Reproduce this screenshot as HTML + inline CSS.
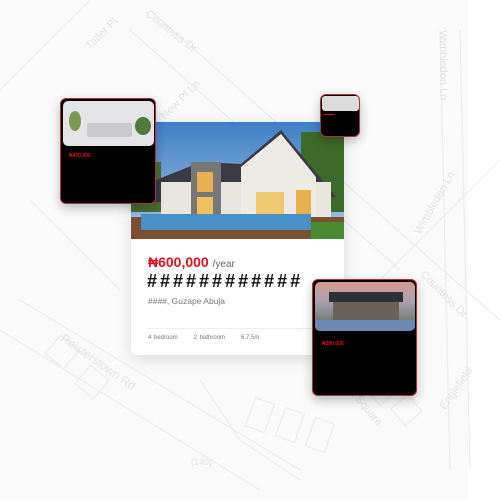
<!DOCTYPE html>
<html><head><meta charset="utf-8"><style>
*{margin:0;padding:0;box-sizing:border-box}
body{width:500px;height:500px;background:#fff;position:relative;overflow:hidden;font-family:"Liberation Sans",sans-serif}
.map{position:absolute;left:0;top:0}
.card{position:absolute;left:131px;top:122px;width:213px;height:233px;background:#fff;border-radius:6px;box-shadow:0 4px 16px rgba(0,0,0,.12);overflow:hidden}
.img{position:absolute;border-radius:5px;overflow:hidden}
.dark{position:absolute;background:#000;border:1px solid #b0303a;border-radius:6px;box-shadow:0 4px 10px rgba(0,0,0,.25);overflow:hidden}
.red{color:#e0101c;font-weight:bold}
</style></head><body>
<svg class="map" width="500" height="500" viewBox="0 0 500 500">
<rect x="0" y="0" width="468" height="500" fill="#fafafa"/>
<g stroke="#ececec" stroke-width="1.2" fill="none">
<path d="M90 0 L0 90"/><path d="M150 10 L420 250 L500 320"/><path d="M130 30 L400 270"/>
<path d="M460 30 L470 470"/><path d="M440 30 L450 470"/>
<path d="M500 160 L400 260 L330 330"/><path d="M20 300 L300 470"/><path d="M0 330 L260 490"/>
<path d="M30 200 L120 290"/><path d="M200 380 L240 440 L300 480"/>
<rect x="250" y="400" width="20" height="30" transform="rotate(20 260 415)"/>
<rect x="280" y="410" width="20" height="30" transform="rotate(20 290 425)"/>
<rect x="310" y="420" width="20" height="30" transform="rotate(20 320 435)"/>
<rect x="370" y="380" width="22" height="22" transform="rotate(-40 380 390)"/>
<rect x="395" y="400" width="22" height="22" transform="rotate(-40 405 410)"/>
<rect x="50" y="340" width="24" height="24" transform="rotate(40 62 352)"/>
<rect x="80" y="370" width="24" height="24" transform="rotate(40 92 382)"/>
</g>
<g fill="#e2e2e2" font-size="11" font-family="Liberation Sans">
<text x="90" y="50" transform="rotate(-45 90 50)">Tatler Pl</text>
<text x="145" y="15" transform="rotate(38 145 15)">Countess Dr</text>
<text x="165" y="120" transform="rotate(-45 165 120)">New Pl Ln</text>
<text x="440" y="30" transform="rotate(90 440 30)">Wimbledon Ln</text>
<text x="420" y="235" transform="rotate(-60 420 235)">Wimbledon Ln</text>
<text x="420" y="275" transform="rotate(45 420 275)">Countess Dr</text>
<text x="60" y="340" transform="rotate(35 60 340)" font-size="12">Reisterstown Rd</text>
<text x="322" y="360" transform="rotate(50 322 360)">Englefield Square</text>
<text x="445" y="410" transform="rotate(-55 445 410)">Englefield</text>
<text x="191" y="465" font-size="9">(140)</text>
</g>
</svg>
<div class="card">
 <svg width="213" height="117" viewBox="0 0 213 117" style="display:block">
  <defs><linearGradient id="sky" x1="0" y1="0" x2="0" y2="1"><stop offset="0" stop-color="#3f7fc6"/><stop offset="1" stop-color="#a9c9e6"/></linearGradient></defs>
  <rect width="213" height="117" fill="url(#sky)"/>
  <rect x="170" y="10" width="43" height="80" fill="#3c6a2a"/>
  <rect x="0" y="40" width="30" height="50" fill="#4a6e30"/>
  <polygon points="20,60 70,40 110,42 150,8 205,75 20,80" fill="#3a3a46"/>
  <rect x="30" y="60" width="170" height="35" fill="#e9e6e0"/>
  <rect x="60" y="40" width="30" height="55" fill="#777"/>
  <polygon points="110,45 150,12 185,55 185,95 110,95" fill="#eeeae4"/>
  <rect x="66" y="50" width="16" height="20" fill="#e8b050"/><rect x="66" y="75" width="16" height="18" fill="#f0c060"/>
  <rect x="125" y="70" width="28" height="22" fill="#f0c870"/><rect x="165" y="68" width="15" height="24" fill="#e8b050"/>
  <rect x="0" y="95" width="213" height="22" fill="#7a5030"/>
  <rect x="10" y="92" width="170" height="16" fill="#4a90c8"/>
  <rect x="180" y="100" width="33" height="17" fill="#4a8a30"/>
 </svg>
 <div style="position:absolute;left:17px;top:132px;font-size:14px"><span class="red">₦600,000</span> <span style="color:#666;font-size:10px">/year</span></div>
 <div style="position:absolute;left:16px;top:149px;font-size:18px;font-weight:bold;letter-spacing:3px;color:#111">############</div>
 <div style="position:absolute;left:17px;top:174px;font-size:8.5px;color:#777">####, Guzape Abuja</div>
 <div style="position:absolute;left:15px;right:15px;top:206px;border-top:1px solid #eee"></div>
 <div style="position:absolute;left:17px;top:213px;font-size:6px;color:#777;word-spacing:1px">4 bedroom&nbsp;&nbsp;&nbsp;&nbsp;&nbsp;&nbsp;2 bathroom&nbsp;&nbsp;&nbsp;&nbsp;&nbsp;&nbsp;6.7.5m</div>
</div>
<div class="dark" style="left:60px;top:98px;width:96px;height:106px">
 <div class="img" style="left:2px;top:2px;width:91px;height:45px;background:#e4e4e6">
  <div style="position:absolute;left:24px;top:22px;width:45px;height:14px;background:#c8cacc;border-radius:2px"></div>
  <div style="position:absolute;left:6px;top:10px;width:12px;height:20px;background:#7a9a50;border-radius:50%"></div>
  <div style="position:absolute;left:72px;top:16px;width:16px;height:18px;background:#4e7a3a;border-radius:50%"></div>
 </div>
 <div class="red" style="position:absolute;left:8px;top:54px;font-size:5px">₦400,000</div>
</div>
<div class="dark" style="left:320px;top:94px;width:40px;height:43px">
 <div class="img" style="left:1px;top:1px;width:37px;height:15px;background:#dcdcdc;border-radius:3px"></div>
 <div style="position:absolute;left:3px;top:19px;width:10px;height:1px;background:#e0101c"></div>
</div>
<div class="dark" style="left:312px;top:279px;width:105px;height:117px">
 <div class="img" style="left:2px;top:2px;width:100px;height:49px;background:linear-gradient(#d99a90,#a9a0b0 40%,#5a6a5a)">
  <div style="position:absolute;left:18px;top:14px;width:66px;height:24px;background:#6a6258"></div>
  <div style="position:absolute;left:14px;top:10px;width:74px;height:10px;background:#2e3038"></div>
  <div style="position:absolute;left:0;top:38px;width:100px;height:11px;background:#6a8ab0"></div>
 </div>
 <div class="red" style="position:absolute;left:9px;top:61px;font-size:5px">₦350,000</div>
</div>
</body></html>
